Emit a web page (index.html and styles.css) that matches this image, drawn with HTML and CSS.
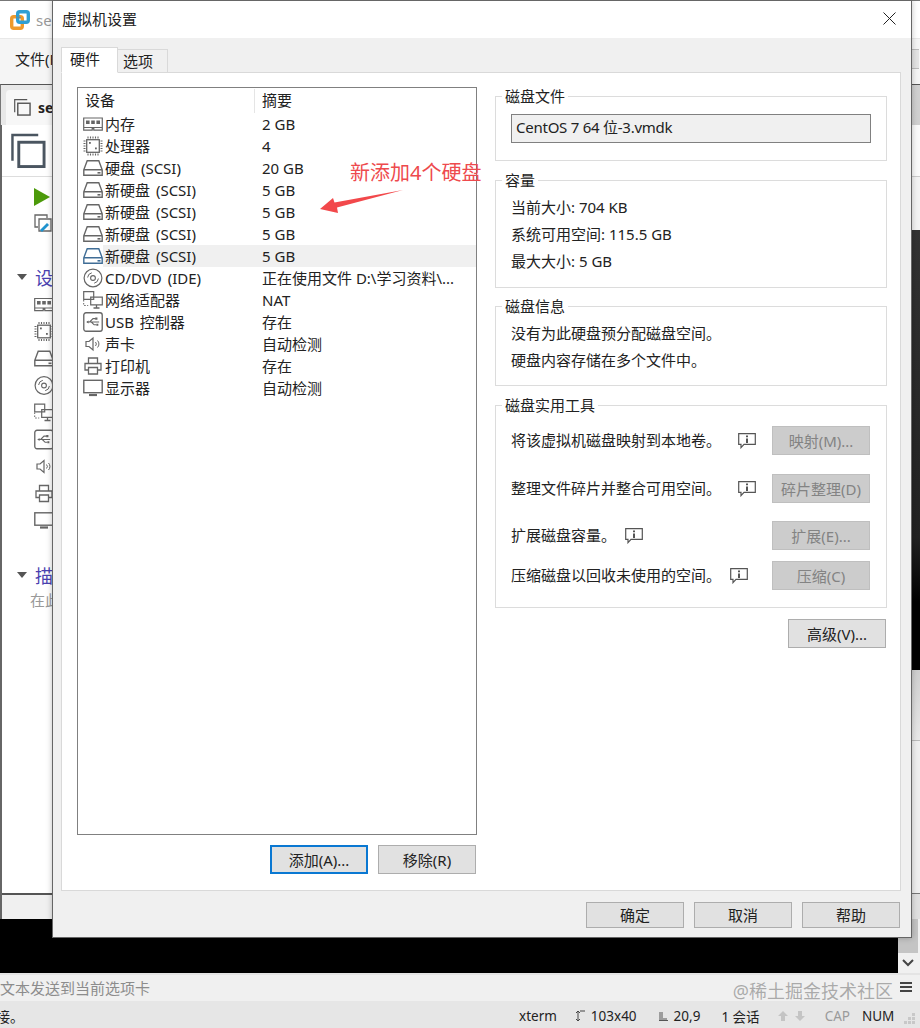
FILE: index.html
```html
<!DOCTYPE html>
<html lang="zh-CN">
<head>
<meta charset="utf-8">
<title>虚拟机设置</title>
<link rel="stylesheet" href="styles.css">
</head>
<body>
<svg class="defs" width="0" height="0" aria-hidden="true">
  <symbol id="i-ram" viewBox="0 0 20 14"><path d="M.7 1h18.6v9.5H.7zM.7 10.5v2.7h8.5v-1.600h1.600v1.600h8.500v-2.700" fill="none" stroke="currentColor" stroke-width="1.200"/><path d="M3 3.500h3.600v3.600H3zM8.200 3.500h3.600v3.600H8.200zM13.400 3.500H17v3.600h-3.600z" fill="currentColor"/></symbol>
  <symbol id="i-cpu" viewBox="0 0 20 20"><rect x="3.700" y="3.700" width="12.600" height="12.600" fill="none" stroke="currentColor" stroke-width="1.300"/><path d="M5 .5v2M7.500.5v2M10 .5v2M12.500.5v2M15 .5v2M5 17.500v2M7.500 17.500v2M10 17.500v2M12.500 17.500v2M15 17.500v2M.5 5h2M.5 7.500h2M.5 10h2M.5 12.500h2M.5 15h2M17.500 5h2M17.500 7.500h2M17.500 10h2M17.500 12.500h2M17.500 15h2" stroke="currentColor" stroke-width="1.100"/><rect x="6" y="6" width="1.800" height="1.800" fill="currentColor"/><rect x="12" y="11.500" width="1.800" height="1.800" fill="currentColor"/></symbol>
  <symbol id="i-disk" viewBox="0 0 20 16"><path d="M4.200.8h11.600L19.200 9.800v5.400H.8V9.800zM.8 9.800h18.400" fill="none" stroke="currentColor" stroke-width="1.400"/><path d="M14.500 12h3v1.600h-3z" fill="currentColor"/></symbol>
  <symbol id="i-cd" viewBox="0 0 20 20"><circle cx="10" cy="10" r="8.900" fill="none" stroke="currentColor" stroke-width="1.200"/><circle cx="10" cy="10" r="2.400" fill="none" stroke="currentColor" stroke-width="1.100"/><path d="M4.600 9.500a5.400 5.400 0 0 1 4.200-4.700M15.400 10.500a5.400 5.400 0 0 1-4.200 4.700" fill="none" stroke="currentColor"/></symbol>
  <symbol id="i-net" viewBox="0 0 20 18"><path d="M.7.7h10v7.600H.7zM7.700 6.200h11.600v7.600H7.700z" fill="#fff" stroke="currentColor" stroke-width="1.200"/><path d="M13.500 14v2.500M10.500 17h6" stroke="currentColor" stroke-width="1.300"/><path d="M.7 9v5.500h4.500" fill="none" stroke="currentColor" stroke-dasharray="1.500 1.500"/></symbol>
  <symbol id="i-usb" viewBox="0 0 18 18"><rect x=".7" y=".7" width="16.600" height="16.600" rx="2" fill="none" stroke="currentColor" stroke-width="1.200"/><path d="M3.500 9h11M6 9l3-3h2.500M7.500 9l2.500 2.500h2" fill="none" stroke="currentColor" stroke-width="1"/><path d="M3 9l2-1.400v2.800zM11 5h2v2h-2zM12 10.500h1.800v1.800H12z" fill="currentColor"/></symbol>
  <symbol id="i-sound" viewBox="0 0 20 16"><path d="M3 5.500h3L10 2v12l-4-3.500H3z" fill="none" stroke="currentColor" stroke-width="1.200"/><path d="M12.500 6a3 3 0 0 1 0 4M14.500 4.500a5 5 0 0 1 0 7" fill="none" stroke="currentColor"/></symbol>
  <symbol id="i-print" viewBox="0 0 20 20"><path d="M5.500 7V2h9v5M5.500 14H2V7.500h16V14h-3.500" fill="none" stroke="currentColor" stroke-width="1.300"/><path d="M5.500 11.500h9V18h-9z" fill="none" stroke="currentColor" stroke-width="1.300"/></symbol>
  <symbol id="i-mon" viewBox="0 0 20 17"><rect x=".8" y=".8" width="18.400" height="12.400" fill="none" stroke="currentColor" stroke-width="1.400"/><path d="M6 15.500h8" stroke="currentColor" stroke-width="2.200"/></symbol>
  <symbol id="i-info" viewBox="0 0 18 16"><path d="M.7.7h16.600v10.600H6l-3 3.300v-3.300H.7z" fill="none" stroke="currentColor" stroke-width="1.200"/><path d="M8 2.500h2v1.800H8zM8 5.500h2v4.500H8z" fill="currentColor"/></symbol>
  <symbol id="i-copy" viewBox="0 0 36 36"><path d="M1.500 28V1.500H28" fill="none" stroke="currentColor" stroke-width="2.500"/><rect x="8" y="9" width="26" height="25" fill="none" stroke="currentColor" stroke-width="3"/></symbol>
</svg>

<div class="app">
  <header class="app-title">
    <svg class="app-logo" viewBox="0 0 20 20"><rect x="1.700" y="6.700" width="10.600" height="11.600" rx="2" fill="none" stroke="#ee9a2c" stroke-width="3.400"/><rect x="7.700" y="1.700" width="10.600" height="10.600" rx="2" fill="none" stroke="#2f9fd3" stroke-width="3.400"/><path d="M6 7.500h4.800" stroke="#5a8fa8" stroke-width="1.400"/></svg>
    <span class="app-name">se</span>
  </header>
  <nav class="app-menu"><span>文件(F)</span><span class="menu-box"></span></nav>
  <div class="app-tabs"><div class="app-tab"><svg class="tab-ico"><use href="#i-copy"/></svg><b>server</b></div></div>
  <main class="app-page">
    <section class="pane">
      <div class="pane-head"><svg class="pane-big"><use href="#i-copy"/></svg></div>
      <div class="pane-actions">
        <div class="play"></div>
        <svg class="edit" viewBox="0 0 18 18"><path d="M4 13H1V1h12v3" fill="none" stroke="#666" stroke-width="1.300"/><path d="M5 5h12v12H5z" fill="none" stroke="#666" stroke-width="1.300"/><path d="M6 16l7-7 2 2-7 7z" fill="#1f93cf"/></svg>
      </div>
      <h2 class="pane-h"><i class="tri"></i>设备</h2>
      <div class="pane-icons">
        <svg class="pi"><use href="#i-ram"/></svg>
        <svg class="pi"><use href="#i-cpu"/></svg>
        <svg class="pi"><use href="#i-disk"/></svg>
        <svg class="pi"><use href="#i-cd"/></svg>
        <svg class="pi"><use href="#i-net"/></svg>
        <svg class="pi"><use href="#i-usb"/></svg>
        <svg class="pi"><use href="#i-sound"/></svg>
        <svg class="pi"><use href="#i-print"/></svg>
        <svg class="pi"><use href="#i-mon"/></svg>
      </div>
      <h2 class="pane-h pane-h2"><i class="tri"></i>描述</h2>
      <p class="pane-note">在此处键入描述</p>
      <div class="pane-foot"></div>
    </section>
    <aside class="strip">
      <div class="s1"></div><div class="s2"></div><div class="s3"></div><div class="s4"></div><div class="s5"></div><div class="s6"></div>
    </aside>
  </main>
  <div class="terminal">
    <div class="scrollbar"><div class="thumb"></div><div class="chev"><svg viewBox="0 0 12 8" width="12" height="8"><path d="M1 1l5 5 5-5" fill="none" stroke="#444" stroke-width="2"/></svg></div></div>
  </div>
  <div class="sendbar">
    <span class="send-text">文本发送到当前选项卡</span>
    <span class="mark">@稀土掘金技术社区</span>
    <span class="burger"></span>
  </div>
  <footer class="status">
    <span class="st-left">接。</span>
    <span class="st st-term">xterm</span>
    <svg class="st-ico st-a" viewBox="0 0 11 12"><path d="M3 1v10M1 3l2-2 2 2M1 9l2 2 2-2M5 1h5" fill="none" stroke="#444"/></svg>
    <span class="st st-size">103x40</span>
    <svg class="st-ico st-b" viewBox="0 0 9 10"><path d="M1 1v8M3 1v8M5 7v2M7 7v2M0 9.500h9" fill="none" stroke="#555"/></svg>
    <span class="st st-pos">20,9</span>
    <span class="st st-ses">1 会话</span>
    <span class="st-arrows">
      <svg viewBox="0 0 10 10" width="10" height="10"><path d="M5 0l5 5H7v5H3V5H0z" fill="#c4c4c4"/></svg>
      <svg viewBox="0 0 10 10" width="10" height="10"><path d="M5 10l5-5H7V0H3v5H0z" fill="#c4c4c4"/></svg>
    </span>
    <span class="st st-cap">CAP</span>
    <span class="st st-num">NUM</span>
    <svg class="st-grip" viewBox="0 0 12 12"><path d="M9 0h3v3H9zM5 4h3v3H5zM9 4h3v3H9zM1 8h3v3H1zM5 8h3v3H5zM9 8h3v3H9z" fill="#c8c8c8"/></svg>
  </footer>
</div>

<div class="dialog">
  <div class="dlg-title">
    <span>虚拟机设置</span>
    <svg class="dlg-x" viewBox="0 0 13 13" width="13" height="13"><path d="M.5.500l12 12M12.500.500l-12 12" stroke="#222" stroke-width="1"/></svg>
  </div>
  <div class="dlg-body">
    <div class="tabs">
      <div class="tab tab-on">硬件</div>
      <div class="tab">选项</div>
    </div>
    <div class="panel">
      <div class="col-left">
        <div class="list">
          <div class="row row-head"><span class="c1">设备</span><span class="c2">摘要</span></div>
          <div class="row"><span class="c1"><svg class="ico"><use href="#i-ram"/></svg>内存</span><span class="c2">2 GB</span></div>
          <div class="row"><span class="c1"><svg class="ico"><use href="#i-cpu"/></svg>处理器</span><span class="c2">4</span></div>
          <div class="row"><span class="c1"><svg class="ico"><use href="#i-disk"/></svg>硬盘 (SCSI)</span><span class="c2">20 GB</span></div>
          <div class="row"><span class="c1"><svg class="ico"><use href="#i-disk"/></svg>新硬盘 (SCSI)</span><span class="c2">5 GB</span></div>
          <div class="row"><span class="c1"><svg class="ico"><use href="#i-disk"/></svg>新硬盘 (SCSI)</span><span class="c2">5 GB</span></div>
          <div class="row"><span class="c1"><svg class="ico"><use href="#i-disk"/></svg>新硬盘 (SCSI)</span><span class="c2">5 GB</span></div>
          <div class="row row-sel"><span class="c1"><svg class="ico ico-sel"><use href="#i-disk"/></svg>新硬盘 (SCSI)</span><span class="c2">5 GB</span></div>
          <div class="row"><span class="c1"><svg class="ico"><use href="#i-cd"/></svg>CD/DVD (IDE)</span><span class="c2">正在使用文件 D:\学习资料\...</span></div>
          <div class="row"><span class="c1"><svg class="ico"><use href="#i-net"/></svg>网络适配器</span><span class="c2">NAT</span></div>
          <div class="row"><span class="c1"><svg class="ico"><use href="#i-usb"/></svg>USB 控制器</span><span class="c2">存在</span></div>
          <div class="row"><span class="c1"><svg class="ico"><use href="#i-sound"/></svg>声卡</span><span class="c2">自动检测</span></div>
          <div class="row"><span class="c1"><svg class="ico"><use href="#i-print"/></svg>打印机</span><span class="c2">存在</span></div>
          <div class="row"><span class="c1"><svg class="ico"><use href="#i-mon"/></svg>显示器</span><span class="c2">自动检测</span></div>
          <div class="note">新添加4个硬盘</div>
          <svg class="arrow" viewBox="0 0 86 24" width="86" height="24"><path d="M1 20L14 9l1.500 4.500L84 1 18 18.500 19 24z" fill="#f2484b"/></svg>
        </div>
        <div class="list-btns">
          <button class="btn btn-primary">添加(A)...</button>
          <button class="btn">移除(R)</button>
        </div>
      </div>
      <div class="col-right">
        <div class="group g-file">
          <span class="legend">磁盘文件</span>
          <div class="field">CentOS 7 64 位-3.vmdk</div>
        </div>
        <div class="group g-cap">
          <span class="legend">容量</span>
          <p>当前大小: 704 KB</p>
          <p>系统可用空间: 115.5 GB</p>
          <p>最大大小: 5 GB</p>
        </div>
        <div class="group g-info">
          <span class="legend">磁盘信息</span>
          <p>没有为此硬盘预分配磁盘空间。</p>
          <p>硬盘内容存储在多个文件中。</p>
        </div>
        <div class="group g-tools">
          <span class="legend">磁盘实用工具</span>
          <div class="tool"><span>将该虚拟机磁盘映射到本地卷。</span><svg class="inf inf-a"><use href="#i-info"/></svg><button class="btn btn-off">映射(M)...</button></div>
          <div class="tool"><span>整理文件碎片并整合可用空间。</span><svg class="inf inf-a"><use href="#i-info"/></svg><button class="btn btn-off">碎片整理(D)</button></div>
          <div class="tool"><span>扩展磁盘容量。</span><svg class="inf inf-b"><use href="#i-info"/></svg><button class="btn btn-off">扩展(E)...</button></div>
          <div class="tool"><span>压缩磁盘以回收未使用的空间。</span><svg class="inf inf-b"><use href="#i-info"/></svg><button class="btn btn-off">压缩(C)</button></div>
        </div>
        <div class="adv"><button class="btn">高级(V)...</button></div>
      </div>
    </div>
    <div class="dlg-foot">
      <button class="btn btn-foot">确定</button>
      <button class="btn btn-foot">取消</button>
      <button class="btn btn-foot">帮助</button>
    </div>
  </div>
</div>
</body>
</html>
```

FILE: styles.css
```css
* { box-sizing: border-box; }
html, body { margin: 0; padding: 0; }
body {
  position: relative;
  width: 920px;
  height: 1028px;
  overflow: hidden;
  background: #000;
  font-family: "Noto Sans", "Noto Sans CJK SC", sans-serif;
  font-size: 15px;
  color: #222;
}
.defs { position: absolute; }
p, h2 { margin: 0; font-weight: normal; }

/* background application */
.app { display: flex; flex-direction: column; height: 1028px; }
.app-title { height: 38px; flex: none; display: flex; align-items: center; gap: 6px; padding-left: 10px; background: #fff; border-top: 1px solid #777; }
.app-logo { width: 20px; height: 20px; }
.app-name { color: #999; font-size: 15px; }
.app-menu { height: 46px; flex: none; display: flex; align-items: center; justify-content: space-between; padding: 0 1px 6px 15px; background: #f5f5f5; border-top: 1px solid #e8e8e8; }
.menu-box { width: 9px; height: 20px; background: #e4e4e4; border: 1px solid #bbb; border-right: 0; }
.app-tabs { height: 41px; flex: none; padding: 5px 0 0 5px; background: linear-gradient(90deg, #e8e8e8, #e8e8e8 50%, #d0d0d0); border-top: 1px solid #555; border-left: 1px solid #777; }
.app-tab { height: 35px; width: 300px; display: flex; align-items: center; gap: 7px; padding-left: 8px; background: #f7f7f7; border-radius: 4px 4px 0 0; color: #222; font-size: 14px; }
.tab-ico { width: 17px; height: 17px; color: #555; }
.app-page { height: 794px; flex: none; display: flex; background: #fff; border-left: 2px solid #666; }
.pane { flex: 1; display: flex; flex-direction: column; min-width: 0; }
.pane-head { height: 52px; flex: none; padding: 8px 0 0 9px; border-bottom: 1px solid #ddd; }
.pane-big { width: 35px; height: 36px; color: #4a5560; display: block; }
.pane-actions { height: 83px; flex: none; padding: 11px 0 0 32px; }
.play { width: 0; height: 0; border-left: 16px solid #4c9a0a; border-top: 9px solid transparent; border-bottom: 9px solid transparent; }
.edit { display: block; width: 18px; height: 18px; margin-top: 8px; }
.pane-h { display: flex; align-items: center; gap: 8px; height: 26px; padding-left: 15px; font-size: 18px; color: #4a3fb0; flex: none; margin-top: 4px; }
.tri { width: 0; height: 0; border-top: 6px solid #555; border-left: 5.500px solid transparent; border-right: 5.500px solid transparent; }
.pane-icons { display: flex; flex-direction: column; padding: 0 0 0 32px; margin-top: 1px; flex: none; color: #666; }
.pi { width: 20px; height: 27px; display: block; flex: none; }
.pane-h2 { margin-top: 28px; }
.pane-note { padding-left: 28px; margin-top: 1px; color: #999; font-size: 15px; white-space: nowrap; }
.pane-foot { margin-top: auto; height: 26px; flex: none; background: #f0f0f0; border-top: 2px solid #555; }
.strip { width: 9px; flex: none; display: flex; flex-direction: column; }
.s1 { height: 52px; background: #fafafa; border-bottom: 1px solid #ccc; }
.s2 { height: 53px; background: #f3f3f3; }
.s3 { height: 440px; background: linear-gradient(180deg, #333, #222 70%, #000 85%); }
.s4 { height: 70px; background: linear-gradient(180deg, #cfcfcf, #e8e8e8); }
.s5 { height: 153px; background: #efefef; border-top: 1px solid #bbb; }
.s6 { height: 26px; background: #e0e0e0; border-top: 1px solid #777; }
.terminal { height: 54px; flex: none; display: flex; justify-content: flex-end; background: #000; }
.scrollbar { width: 22px; display: flex; flex-direction: column; padding-right: 2px; background: #f0f0f0; }
.thumb { flex: 1; background: #c4c4c4; }
.chev { height: 20px; display: flex; align-items: center; justify-content: center; background: #f0f0f0; }
.sendbar { height: 28px; flex: none; display: flex; align-items: center; padding-bottom: 2px; background: #f0f0f0; border-top: 2px solid #e4e4e4; color: #8c8c8c; font-size: 15px; }
.send-text { white-space: nowrap; }
.mark { margin-left: auto; font-size: 18px; color: rgba(110, 110, 110, .55); margin-top: 6px; }
.burger { width: 12px; height: 10px; margin: 0 8px 0 7px; border-top: 2px solid #444; border-bottom: 2px solid #444; }
.burger::after { content: ""; display: block; height: 2px; margin-top: 2px; background: #444; }
.status { height: 27px; flex: none; display: flex; align-items: center; padding-top: 3px; background: #e6e6e6; font-size: 13.500px; color: #222; }
.st-left { margin-left: -4px; font-size: 14px; width: 523px; flex: none; }
.st { flex: none; white-space: nowrap; }
.st-ico { flex: none; }
.st-a { width: 11px; height: 12px; margin-left: 18px; }
.st-size { margin-left: 5px; }
.st-b { width: 9px; height: 10px; margin-left: 22px; }
.st-pos { margin-left: 6px; }
.st-ses { margin-left: 21px; }
.st-arrows { display: flex; gap: 7px; margin-left: 18px; flex: none; }
.st-cap { margin-left: 20px; color: #9a9a9a; }
.st-num { margin-left: 12px; }
.st-grip { width: 12px; height: 12px; margin-left: 9px; margin-top: 6px; }

/* dialog window */
.dialog { position: absolute; left: 52px; top: 0; width: 860px; height: 938px; display: flex; flex-direction: column; background: #f0f0f0; border: 1px solid #666; box-shadow: 0 0 6px rgba(0, 0, 0, .25); }
.dlg-title { height: 37px; flex: none; display: flex; align-items: center; justify-content: space-between; padding: 0 15px 2px 9px; background: #fff; color: #222; }
.dlg-body { flex: 1; display: flex; flex-direction: column; padding: 9px 10px 0 8px; }
.tabs { display: flex; align-items: flex-end; height: 26px; flex: none; margin-bottom: -1px; position: relative; z-index: 1; }
.tab { width: 50px; height: 24px; padding-left: 5px; line-height: 22px; background: #f0f0f0; border: 1px solid #d9d9d9; border-left: 0; }
.tab-on { width: 57px; height: 26px; padding-left: 8px; line-height: 22px; background: #fff; border-left: 1px solid #d9d9d9; border-bottom-color: #fff; }
.panel { height: 819px; flex: none; display: flex; gap: 18px; padding: 14px 14px 16px 15px; background: #fff; border: 1px solid #d9d9d9; }
.col-left { width: 400px; flex: none; display: flex; flex-direction: column; }
.list { position: relative; flex: 1; border: 1px solid #808080; background: #fff; padding-top: 1px; }
.row { display: grid; grid-template-columns: 177px 1fr; height: 22px; line-height: 22px; white-space: nowrap; }
.row-head { height: 24px; line-height: 23px; }
.row-head .c1 { display: block; padding-left: 7px; border-right: 1px solid #e5e5e5; }
.c1 { display: flex; align-items: center; padding-left: 5px; word-spacing: 2px; }
.c2 { padding-left: 7px; }
.row-sel { background: linear-gradient(90deg, #fff 25px, #f0f0f0 25px); }
.ico { width: 20px; height: 20px; flex: none; margin-right: 2px; color: #666; }
.ico-sel { color: #3f6d96; }
.note { position: absolute; left: 272px; top: 72px; color: #ee4a4d; font-size: 20px; line-height: 26px; white-space: nowrap; }
.arrow { position: absolute; left: 241px; top: 101px; }
.list-btns { display: flex; justify-content: flex-end; gap: 10px; margin-top: 10px; padding-right: 1px; flex: none; }
.btn { width: 98px; height: 29px; padding: 0 0 1px; font: inherit; color: #222; background: #e1e1e1; border: 1px solid #adadad; white-space: nowrap; }
.btn-primary { border: 2px solid #0a78d2; }
.btn-off { flex: none; background: #ccc; border-color: #bfbfbf; color: #838383; }
.btn-foot { height: 26px; }
.col-right { width: 392px; flex: none; margin-top: 9px; display: flex; flex-direction: column; }
.group { position: relative; border: 1px solid #dcdcdc; flex: none; padding: 13px 15px 0; }
.group p { line-height: 27px; white-space: nowrap; }
.legend { position: absolute; left: 6px; top: -11px; padding: 0 3px; background: #fff; line-height: 20px; }
.g-file { height: 65px; padding-top: 17px; }
.g-cap { height: 108px; margin-top: 19px; }
.g-info { height: 80px; margin-top: 18px; }
.g-tools { height: 203px; margin-top: 19px; padding: 20px 16px 0 15px; display: grid; grid-template-rows: 48px 47px 40px 29px; }
.field { height: 29px; line-height: 24px; padding-left: 4px; letter-spacing: -.25px; background: #f0f0f0; border: 1px solid #808080; white-space: nowrap; }
.tool { display: flex; align-items: flex-start; line-height: 29px; white-space: nowrap; }
.tool .btn { margin-left: auto; }
.inf { width: 18px; height: 16px; color: #555; flex: none; margin-top: 7px; }
.inf-a { margin-left: 17px; }
.inf-b { margin-left: 9px; }
.adv { display: flex; justify-content: flex-end; padding-right: 1px; margin-top: 11px; flex: none; }
.dlg-foot { flex: 1; display: flex; justify-content: flex-end; gap: 10px; padding: 11px 1px 0 0; }
```
